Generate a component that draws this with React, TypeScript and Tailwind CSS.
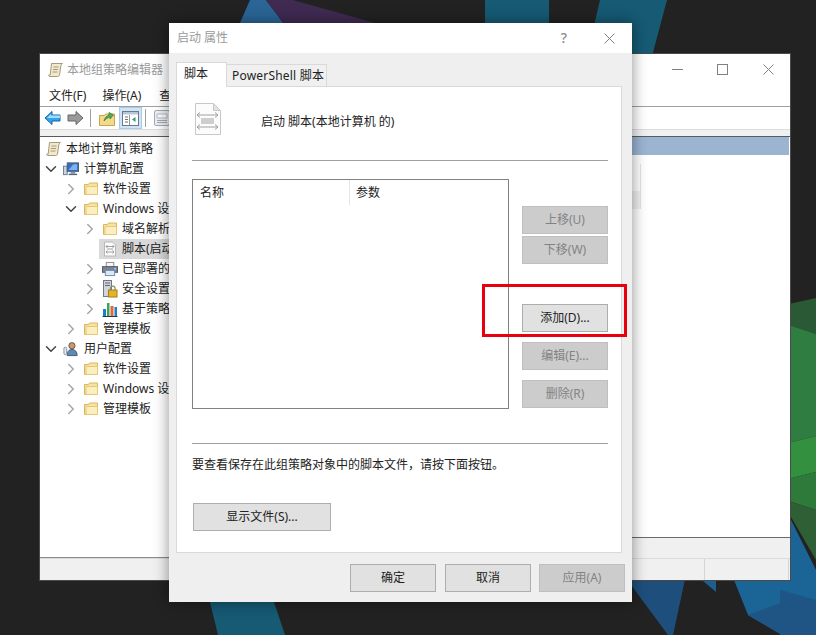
import { ChevronDown, ChevronRight } from "lucide-react";

const FONT = "[font-family:'Noto_Sans','Noto_Sans_CJK_SC',sans-serif]";

const Wallpaper = () => (
  <svg className="absolute inset-0" width="816" height="635" viewBox="0 0 816 635">
    <polygon points="250,0 266,0 290,32 236,32" fill="#2a6596" />
    <polygon points="266,0 293,0 400,30 290,32" fill="#3f2a52" />
    <polygon points="485,0 549,0 549,60 485,60" fill="#165a74" />
    <polygon points="600,0 667,0 651,60 586,60" fill="#165a74" />
    <polygon points="207,590 270,590 285,635 218,635" fill="#165a74" />
    <polygon points="620,570 687,570 673,635 668,635" fill="#1e4f7c" />
    <polygon points="690,570 716,570 716,592" fill="#1b5f8f" />
    <polygon points="730,570 816,570 816,635 782,635 748,615" fill="#1a6496" />
    <polygon points="748,615 816,590 816,635 782,635" fill="#1f5585" />
    <polygon points="780,306 816,298 816,334 780,322" fill="#2a5a35" />
    <polygon points="780,322 816,334 816,436 780,445" fill="#2f7d40" />
    <polygon points="780,445 816,436 816,472 780,481" fill="#33903f" />
    <polygon points="780,481 816,472 816,510 780,498" fill="#2e7a3a" />
    <polygon points="780,498 816,510 816,560" fill="#2e5f35" />
    <polygon points="780,498 816,570 816,635 780,635" fill="#1a6496" />
    <polygon points="780,590 816,600 816,635 780,635" fill="#1f5585" />
  </svg>
);

const ScrollIcon = () => (
  <svg width="16" height="16" viewBox="0 0 16 16">
    <path d="M3.500 1.500h11c-1 .500-1.500 1.500-1.700 2.500l-1.300 9c-.2 1-1 1.500-2 1.500H2c-1 0-1.500-.7-1.300-1.500h1.500z" fill="#f1e9cc" stroke="#a69a78" />
    <path d="M5.500 5h5M5 7.500h5M4.500 10h5" stroke="#a69a78" />
  </svg>
);

const FolderIcon = () => (
  <svg width="16" height="16" viewBox="0 0 16 16">
    <path d="M1.500 13.500v-10h4l1-1.500h8v11.500z" fill="#f8e2a0" stroke="#d9b65e" />
    <path d="M3 13.500V5.500h11.500v8z" fill="#fbeebf" stroke="#e6c878" />
  </svg>
);

const ComputerIcon = () => (
  <svg width="17" height="16" viewBox="0 0 17 16">
    <rect x="0.500" y="5" width="4" height="9" fill="#c8d4e4" stroke="#6a7d96" />
    <rect x="4.500" y="1.500" width="12" height="9" fill="#2f6fc6" stroke="#4a5a70" />
    <path d="M6 9l5-6h4v6z" fill="#7fb2ea" />
    <rect x="8" y="11" width="5" height="2" fill="#8a97a8" />
    <rect x="6" y="13" width="9" height="1.500" fill="#55657a" />
  </svg>
);

const ScriptSmallIcon = () => (
  <svg width="16" height="16" viewBox="0 0 16 16">
    <path d="M2.500 1h8l3 3v11h-11z" fill="#fbfbfb" stroke="#b8b8b8" />
    <path d="M4 5.500h8M5.500 4l-1.500 1.500L5.500 7M10.500 4L12 5.500 10.500 7M5 8h6M4 11h8M5.500 9.500L4 11l1.500 1.500M10.500 9.500L12 11l-1.500 1.500" stroke="#8e8e8e" fill="none" strokeWidth="0.800" />
  </svg>
);

const PrinterIcon = () => (
  <svg width="17" height="16" viewBox="0 0 17 16">
    <rect x="4.500" y="1" width="8" height="5" fill="#f6f6f6" stroke="#8a8a8a" />
    <rect x="0.500" y="5.500" width="16" height="6" fill="#7a8591" stroke="#4f5963" />
    <rect x="3.500" y="9.500" width="10" height="5.500" fill="#dce8f4" stroke="#6a8bab" />
    <rect x="13" y="7" width="2" height="1.500" fill="#9ad0ff" />
  </svg>
);

const LockIcon = () => (
  <svg width="16" height="18" viewBox="0 0 16 18">
    <rect x="1.500" y="0.500" width="8" height="16" fill="#cfd5dc" stroke="#6f7985" />
    <path d="M3 3h5M3 5.500h5" stroke="#5d6772" />
    <rect x="6.500" y="10" width="8.500" height="7" fill="#e4b32b" stroke="#a87c10" />
    <path d="M8.500 10V8.500a2.300 2.300 0 0 1 4.600 0V10" fill="none" stroke="#8a8a6a" strokeWidth="1.200" />
  </svg>
);

const ChartIcon = () => (
  <svg width="16" height="16" viewBox="0 0 16 16">
    <rect x="1" y="8" width="3" height="7" fill="#1f7fc4" />
    <rect x="5" y="2" width="2.500" height="13" fill="#3aa655" />
    <rect x="8.500" y="5" width="3" height="10" fill="#e0683c" />
    <rect x="12.500" y="6" width="2.500" height="9" fill="#1f7fc4" />
    <path d="M.500 15.500h15" stroke="#20364d" />
  </svg>
);

const UserIcon = () => (
  <svg width="17" height="16" viewBox="0 0 17 16">
    <circle cx="9.500" cy="4.500" r="3.300" fill="#c99a72" stroke="#6d5140" />
    <path d="M4.500 15c0-4 1.500-6.500 5-6.500s5.500 2.500 5.500 6.500z" fill="#6488ae" stroke="#3c5a7a" />
    <rect x="1" y="6" width="3" height="8" rx="1.500" fill="#e5ecf4" stroke="#7a8ea6" />
  </svg>
);

const BigScriptIcon = () => (
  <svg width="26" height="32" viewBox="0 0 26 32">
    <path d="M.500.500h18l7 7v24H.500z" fill="#fcfcfc" stroke="#c8c8c8" />
    <path d="M18.500.500v7h7z" fill="#e2e2e2" stroke="#c8c8c8" />
    <path d="M2 12h21M5 9.500L2 12l3 2.500M20 9.500l3 2.500-3 2.500M6 16h13M6 18h13M6 20h13M2 24h21M5 21.500L2 24l3 2.500M20 21.500l3 2.500-3 2.500" fill="none" stroke="#a0a0a0" />
  </svg>
);

const BackArrow = () => (
  <svg width="17" height="16" viewBox="0 0 17 16">
    <path d="M8 1.500L1 8l7 6.500V11h8V5H8z" fill="#35a3ea" stroke="#1565ac" />
    <path d="M7 4L3 8h13V5.500H7z" fill="#a4dcfb" />
  </svg>
);

const ForwardArrow = () => (
  <svg width="17" height="16" viewBox="0 0 17 16">
    <path d="M9 1.500L16 8l-7 6.500V11H1V5h8z" fill="#9a9a9a" stroke="#666" />
  </svg>
);

const FolderUpIcon = () => (
  <svg width="16" height="18" viewBox="0 0 16 18">
    <path d="M.500 16.500V6.500h5l1-1.500h9v11.500z" fill="#f3d98a" stroke="#c9a64e" />
    <path d="M5 12c.500-3 2.500-5 5-6V3.500L14.500 6 11 10V8c-2 .500-4.500 2-6 4z" fill="#4fae4f" stroke="#2f7d33" strokeWidth="0.700" />
  </svg>
);

const PanelIcon = () => (
  <svg width="17" height="15" viewBox="0 0 17 15">
    <rect x=".5" y=".5" width="16" height="14" fill="#fff" stroke="#6b7a8b" />
    <path d="M1 1h15v2.500H1z" fill="#b8c6d6" />
    <path d="M3 6h3M3 8.500h3M3 11h3" stroke="#6f6f6f" />
    <path d="M7.500 4v10" stroke="#8b98a6" />
    <path d="M13.500 6v5l-3.500-2.500z" fill="#2f9d68" />
  </svg>
);

const PropsIcon = () => (
  <svg width="16" height="17" viewBox="0 0 16 17">
    <rect x=".5" y=".5" width="15" height="15" rx="1.500" fill="#eef1f4" stroke="#a2acb6" />
    <path d="M3 4h10v4H3z" fill="#fff" stroke="#b2bcc6" />
    <path d="M3 10.500h10M3 12.500h10" stroke="#a2acb6" />
  </svg>
);

const CloseGlyph = () => (
  <svg width="11" height="11" viewBox="0 0 11 11">
    <path d="M.5.500l10 10M10.500.500l-10 10" stroke="#808080" fill="none" />
  </svg>
);

const treeRows = [
  { label: "本地计算机 策略", icon: <ScrollIcon />, arrow: "none", indent: "pl-[6px]" },
  { label: "计算机配置", icon: <ComputerIcon />, arrow: "down", indent: "pl-[4px]", text: "ml-[5px]" },
  { label: "软件设置", icon: <FolderIcon />, arrow: "right", indent: "pl-[24px]" },
  { label: "Windows 设置", icon: <FolderIcon />, arrow: "down", indent: "pl-[24px]" },
  { label: "域名解析策略", icon: <FolderIcon />, arrow: "right", indent: "pl-[43px]" },
  { label: "脚本(启动/关机)", icon: <ScriptSmallIcon />, arrow: "empty", indent: "pl-[43px]", selected: true },
  { label: "已部署的打印机", icon: <PrinterIcon />, arrow: "right", indent: "pl-[43px]" },
  { label: "安全设置", icon: <LockIcon />, arrow: "right", indent: "pl-[43px]" },
  { label: "基于策略的 QoS", icon: <ChartIcon />, arrow: "right", indent: "pl-[43px]" },
  { label: "管理模板", icon: <FolderIcon />, arrow: "right", indent: "pl-[24px]" },
  { label: "用户配置", icon: <UserIcon />, arrow: "down", indent: "pl-[4px]", text: "ml-[5px]" },
  { label: "软件设置", icon: <FolderIcon />, arrow: "right", indent: "pl-[24px]" },
  { label: "Windows 设置", icon: <FolderIcon />, arrow: "right", indent: "pl-[24px]" },
  { label: "管理模板", icon: <FolderIcon />, arrow: "right", indent: "pl-[24px]" },
];

const TreeRow = ({ row }: { row: any }) => {
  return (
    <div className={`flex h-5 items-center whitespace-nowrap ${row.indent}`}>
      {row.arrow === "none" ? null : (
        <div className="flex w-[14px] justify-center">
          {row.arrow === "down" && <ChevronDown size={18} strokeWidth={2} className="shrink-0 text-[#444444]" />}
          {row.arrow === "right" && <ChevronRight size={18} strokeWidth={2} className="shrink-0 text-[#a6a6a6]" />}
        </div>
      )}
      <div className={`flex h-full flex-1 items-center ${row.arrow === "none" ? "" : "ml-[2px] pl-[3px]"} ${row.selected ? "bg-[#d9d9d9]" : ""}`}>
        <div className="flex w-4 items-center justify-center">{row.icon}</div>
        <span className={`text-xs text-[#222222] ${row.text ?? "ml-1"}`}>{row.label}</span>
      </div>
    </div>
  );
};

const MainWindow = () => (
  <div className="absolute left-[39px] top-[53px] flex h-[528px] w-[752px] flex-col border border-[#4a4a4a] bg-white">
    <div className="flex h-[31px] shrink-0 items-center pl-[8px]">
      <ScrollIcon />
      <span className="ml-[3px] text-xs text-[#9a9a9a]">本地组策略编辑器</span>
      <div className="ml-auto flex items-center">
        <div className="mr-[34px] h-px w-[11px] bg-[#808080]" />
        <div className="mr-[35px] h-[11px] w-[11px] border border-[#808080]" />
        <div className="mr-[16px] flex"><CloseGlyph /></div>
      </div>
    </div>
    <div className="flex h-[22px] shrink-0 items-center border-b border-[#a0a0a0] pl-[9px] text-xs text-[#222222]">
      <span>文件(F)</span>
      <span className="ml-4">操作(A)</span>
      <span className="ml-[18px]">查看(V)</span>
    </div>
    <div className="flex h-[23px] shrink-0 items-center border-b border-[#dcdcdc] pl-[4px]">
      <BackArrow />
      <div className="ml-[6px]"><ForwardArrow /></div>
      <div className="ml-[6px] h-[18px] w-px bg-[#a0a0a0]" />
      <div className="ml-[8px]"><FolderUpIcon /></div>
      <div className="ml-[4px] flex h-[22px] w-[23px] items-center justify-center border border-[#a8cbe8] bg-[#cfe5f7]"><PanelIcon /></div>
      <div className="ml-[3px] h-[18px] w-px bg-[#a0a0a0]" />
      <div className="ml-[8px]"><PropsIcon /></div>
    </div>
    <div className="h-[7px] shrink-0 border-b border-[#5a5a5a] bg-[#f0f0f0]" />
    <div className="flex min-h-0 flex-1">
      <div className="w-[420px] shrink-0 overflow-hidden border-b border-[#8a8a8a] pt-[2px]">
        {treeRows.map((row, i) => (
          <TreeRow key={i} row={row} />
        ))}
      </div>
      <div className="flex flex-1 flex-col">
        <div className="mr-px h-[18px] shrink-0 bg-[#9ab4d2]" />
        <div className="flex flex-1 flex-col justify-start pt-[9px]">
          <div className="flex h-[45px] w-[181px] flex-col justify-end border-r border-[#e4e4e4]">
            <div className="h-[18px] bg-[#f0f0f0]" />
          </div>
        </div>
        <div className="h-[21px] shrink-0 border-t border-[#6a6a6a] bg-[#f0f0f0]" />
      </div>
    </div>
    <div className="flex h-[22px] shrink-0 justify-end border-t border-[#dcdcdc] bg-[#f0f0f0]">
      <div className="w-[85px] border-l border-r border-[#d4d4d4]" />
      <div className="w-px" />
    </div>
  </div>
);

const Btn = ({ label, disabled, className }: { label: string; disabled?: boolean; className?: string }) => (
  <div
    className={`flex h-7 items-center justify-center border text-xs ${
      disabled ? "border-[#bfbfbf] bg-[#cccccc] text-[#838383]" : "border-[#adadad] bg-[#e1e1e1] text-[#222222]"
    } ${className ?? "w-[86px]"}`}
  >
    {label}
  </div>
);

const Dialog = () => (
  <div className="absolute left-[169px] top-[23px] flex h-[579px] w-[463px] flex-col bg-[#efefef] shadow-[0_0_14px_rgba(0,0,0,0.45)]">
    <div className="flex h-[30px] shrink-0 items-center bg-white pl-2">
      <span className="text-xs text-[#9a9a9a]">启动 属性</span>
      <span className="ml-auto mr-[37px] text-sm font-medium text-[#8a8a8a]">?</span>
      <div className="mr-[17px] flex"><CloseGlyph /></div>
    </div>
    <div className="mt-[9px] flex h-[24px] shrink-0 items-end pl-[7px]">
      <div className="z-10 -mb-px flex h-[25px] w-[51px] items-start border border-b-0 border-[#d9d9d9] bg-white pl-[7px] pt-[3px] text-xs text-[#222222]">脚本</div>
      <div className="flex h-[22px] w-[100px] items-center border border-b-0 border-l-0 border-[#d9d9d9] bg-[#f0f0f0] pl-[5px] text-xs tracking-[0.2px] text-[#222222]">PowerShell 脚本</div>
    </div>
    <div className="ml-[7px] mr-[10px] flex h-[467px] shrink-0 flex-col border border-[#d9d9d9] bg-white pl-[15px] pr-[13px]">
      <div className="flex h-[74px] shrink-0 items-start border-b border-[#a0a0a0]">
        <div className="ml-[3px] mt-[16px]"><BigScriptIcon /></div>
        <span className="ml-[40px] mt-[27px] text-xs text-[#222222]">启动 脚本(本地计算机 的)</span>
      </div>
      <div className="mt-[18px] flex h-[230px] shrink-0">
        <div className="h-full w-[317px] border border-[#828282]">
          <div className="flex h-[25px] text-xs text-[#222222]">
            <div className="flex w-[157px] items-center border-r border-[#e5e5e5] pl-[7px]">名称</div>
            <div className="flex items-center pl-[6px]">参数</div>
          </div>
        </div>
        <div className="ml-[13px] flex flex-col pt-[27px]">
          <Btn label="上移(U)" disabled />
          <Btn label="下移(W)" disabled className="mt-[2px] w-[86px]" />
          <Btn label="添加(D)..." className="mt-[40px] w-[86px]" />
          <Btn label="编辑(E)..." disabled className="mt-[10px] w-[86px]" />
          <Btn label="删除(R)" disabled className="mt-[10px] w-[86px]" />
        </div>
      </div>
      <div className="mt-[34px] h-px shrink-0 bg-[#a0a0a0]" />
      <div className="mt-[12px] whitespace-nowrap text-xs leading-[18px] text-[#222222]">要查看保存在此组策略对象中的脚本文件，请按下面按钮。</div>
      <Btn label="显示文件(S)..." className="ml-px mt-[29px] w-[138px]" />
    </div>
    <div className="mt-[11px] flex justify-end pr-[7px]">
      <Btn label="确定" />
      <Btn label="取消" className="ml-[9px] w-[86px]" />
      <Btn label="应用(A)" disabled className="ml-2 w-[86px]" />
    </div>
  </div>
);

export default function App() {
  return (
    <div className={`relative h-[635px] w-[816px] overflow-hidden bg-[#222222] ${FONT}`}>
      <Wallpaper />
      <MainWindow />
      <Dialog />
      <div className="absolute left-[482px] top-[284px] h-[53px] w-[145px] border-[3px] border-[#e8000c]" />
    </div>
  );
}
